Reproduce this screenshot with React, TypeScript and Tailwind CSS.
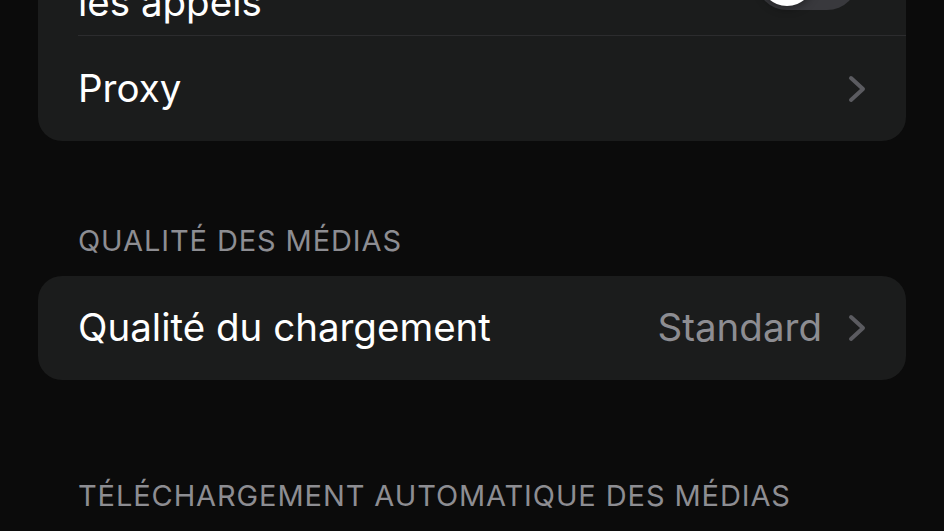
const font = { fontFamily: 'Inter, "Noto Sans", sans-serif' };

const Chevron = () => (
  <svg width="18" height="28" viewBox="0 0 18 28" fill="none" className="shrink-0">
    <path d="M3 3 L15 14 L3 25" stroke="#5b5b60" strokeWidth="4" strokeLinecap="round" strokeLinejoin="round" />
  </svg>
);

const Toggle = ({ on = false }: { on?: boolean }) => (
  <div className={`relative w-[102px] h-[62px] rounded-full shrink-0 ${on ? 'bg-[#34c759]' : 'bg-[#39393d]'}`}>
    <div
      className={`absolute top-[4px] w-[54px] h-[54px] rounded-full bg-white shadow-[0_3px_8px_rgba(0,0,0,0.35)] ${
        on ? 'right-[4px]' : 'left-[4px]'
      }`}
    />
  </div>
);

const SectionHeader = ({ children }: { children: string }) => (
  <div className="px-[78px] text-[29px] leading-[34px] text-[#8d8d92] tracking-[0.9px]">{children}</div>
);

export default function App() {
  return (
    <div className="w-[944px] h-[531px] overflow-hidden bg-[#0b0b0b] text-white" style={font}>
      <div className="mx-[38px] -mt-[77px] rounded-[24px] bg-[#1b1c1c]">
        <div className="ml-[40px] pr-[48px] py-[10px] flex items-center justify-between border-b border-[#2c2c2e]">
          <div className="text-[38.5px] leading-[46px]">
            <div>Utiliser le proxy pour</div>
            <div>les appels</div>
          </div>
          <Toggle />
        </div>
        <div className="h-[105px] pl-[40px] pr-[40px] flex items-center justify-between">
          <span className="text-[38.5px]">Proxy</span>
          <Chevron />
        </div>
      </div>

      <div className="h-[83px]" />
      <SectionHeader>QUALITÉ DES MÉDIAS</SectionHeader>

      <div className="mx-[38px] mt-[18px] h-[104px] rounded-[24px] bg-[#1b1c1c] pl-[40px] pr-[40px] flex items-center justify-between">
        <span className="text-[38.5px]">Qualité du chargement</span>
        <div className="flex items-center gap-[26px]">
          <span className="text-[38.5px] text-[#8d8d92]">Standard</span>
          <Chevron />
        </div>
      </div>

      <div className="h-[99px]" />
      <SectionHeader>TÉLÉCHARGEMENT AUTOMATIQUE DES MÉDIAS</SectionHeader>
    </div>
  );
}
